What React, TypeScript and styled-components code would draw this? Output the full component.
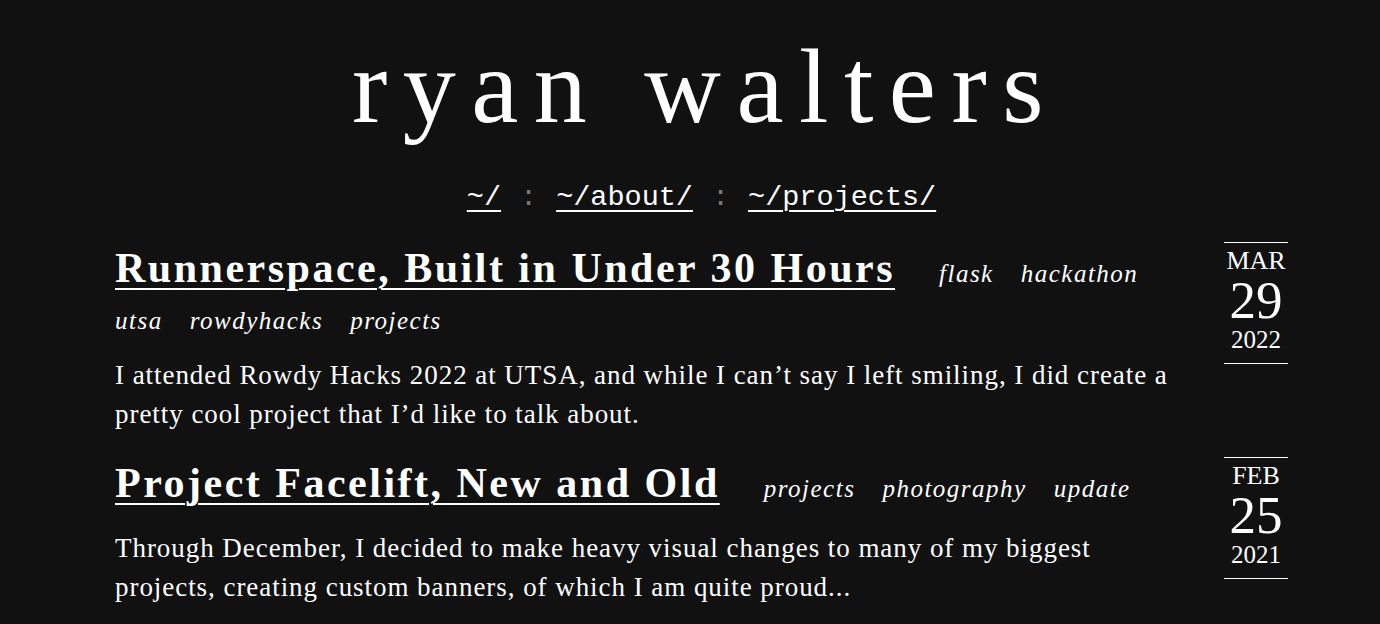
import React from "react";
import styled, { createGlobalStyle } from "styled-components";

const Global = createGlobalStyle`
  html, body { margin: 0; padding: 0; background: #111111; }
  body { color: #ffffff; font-family: "Liberation Serif", "Times New Roman", serif; }
`;

const Page = styled.div`
  width: 1380px;
  min-height: 624px;
  box-sizing: border-box;
  padding: 0 92px 0 115px;
  overflow: hidden;
`;

const Header = styled.header`
  display: flex;
  flex-direction: column;
  align-items: center;
  padding-top: 34px;
`;

const SiteTitle = styled.h1`
  margin: 0;
  font-weight: 400;
  font-size: 106px;
  line-height: 106px;
  letter-spacing: 15.5px;
  text-indent: 8px;
`;

const Nav = styled.nav`
  display: flex;
  align-items: baseline;
  gap: 19px;
  margin-top: 41px;
  font-family: "Liberation Mono", "Courier New", monospace;
  font-size: 28.5px;
  line-height: 34px;
`;

const NavLink = styled.a`
  color: #ffffff;
  text-decoration: underline;
  text-underline-offset: 5px;
  text-decoration-thickness: 2px;
`;

const Sep = styled.span`
  color: #777777;
`;

const PostList = styled.main`
  display: flex;
  flex-direction: column;
  gap: 20px;
  margin-top: 24px;
`;

const Post = styled.article`
  display: flex;
  align-items: flex-start;
  gap: 40px;
`;

const PostBody = styled.div`
  flex: 1;
  min-width: 0;
`;

const TitleRow = styled.div`
  display: flex;
  flex-wrap: wrap;
  align-items: baseline;
  column-gap: 27px;
  row-gap: 6px;
`;

const PostTitle = styled.a`
  font-weight: 700;
  font-size: 42px;
  line-height: 58px;
  color: #ffffff;
  margin-right: 17px;
  text-decoration: underline;
  text-decoration-thickness: 2px;
  text-underline-offset: 6px;
  letter-spacing: 2.5px;
`;

const Tag = styled.span`
  font-style: italic;
  font-size: 25px;
  line-height: 36px;
  letter-spacing: 1.5px;
`;

const Excerpt = styled.p`
  margin: 17px 0 0;
  font-size: 27px;
  line-height: 39px;
  letter-spacing: 0.95px;
`;

const DateBox = styled.div`
  width: 64px;
  flex: none;
  display: flex;
  flex-direction: column;
  align-items: center;
  margin-top: 3px;
  border-top: 1px solid #ffffff;
  border-bottom: 1px solid #ffffff;
  padding: 4px 0 8px;
`;

const Month = styled.span`
  font-size: 26px;
  line-height: 28px;
`;

const Day = styled.span`
  font-size: 53px;
  line-height: 50px;
`;

const Year = styled.span`
  font-size: 25px;
  line-height: 30px;
`;

type PostData = {
  title: string;
  tags: string[];
  excerpt: string;
  month: string;
  day: string;
  year: string;
};

const posts: PostData[] = [
  {
    title: "Runnerspace, Built in Under 30 Hours",
    tags: ["flask", "hackathon", "utsa", "rowdyhacks", "projects"],
    excerpt:
      "I attended Rowdy Hacks 2022 at UTSA, and while I can\u2019t say I left smiling, I did create a pretty cool project that I\u2019d like to talk about.",
    month: "MAR",
    day: "29",
    year: "2022",
  },
  {
    title: "Project Facelift, New and Old",
    tags: ["projects", "photography", "update"],
    excerpt:
      "Through December, I decided to make heavy visual changes to many of my biggest projects, creating custom banners, of which I am quite proud...",
    month: "FEB",
    day: "25",
    year: "2021",
  },
];

export default function App() {
  return (
    <Page>
      <Global />
      <Header>
        <SiteTitle>ryan walters</SiteTitle>
        <Nav>
          <NavLink href="#">~/</NavLink>
          <Sep>:</Sep>
          <NavLink href="#">~/about/</NavLink>
          <Sep>:</Sep>
          <NavLink href="#">~/projects/</NavLink>
        </Nav>
      </Header>
      <PostList>
        {posts.map((p) => (
          <Post key={p.title}>
            <PostBody>
              <TitleRow>
                <PostTitle href="#">{p.title}</PostTitle>
                {p.tags.map((t) => (
                  <Tag key={t}>{t}</Tag>
                ))}
              </TitleRow>
              <Excerpt>{p.excerpt}</Excerpt>
            </PostBody>
            <DateBox>
              <Month>{p.month}</Month>
              <Day>{p.day}</Day>
              <Year>{p.year}</Year>
            </DateBox>
          </Post>
        ))}
      </PostList>
    </Page>
  );
}
